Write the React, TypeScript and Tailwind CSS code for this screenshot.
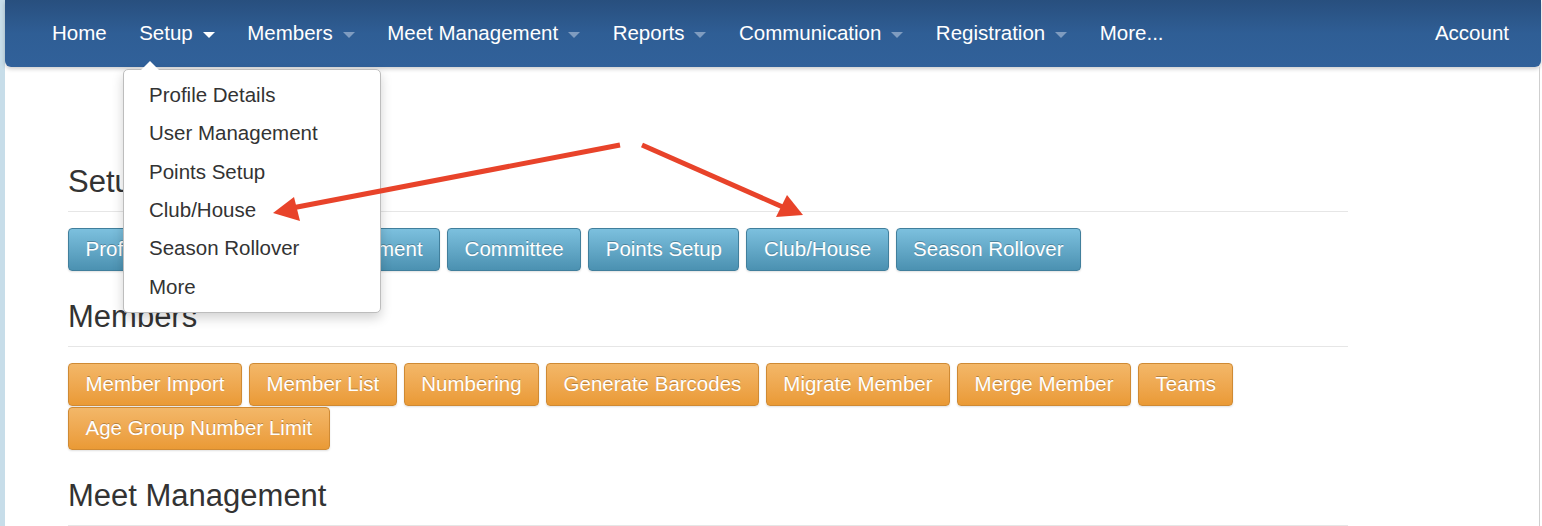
import React from 'react';

const navItems = [
  { label: 'Home', caret: false },
  { label: 'Setup', caret: true, active: true },
  { label: 'Members', caret: true },
  { label: 'Meet Management', caret: true },
  { label: 'Reports', caret: true },
  { label: 'Communication', caret: true },
  { label: 'Registration', caret: true },
  { label: 'More...', caret: false },
];

const setupMenu = ['Profile Details', 'User Management', 'Points Setup', 'Club/House', 'Season Rollover', 'More'];

const setupButtons = ['Profile Details', 'User Management', 'Committee', 'Points Setup', 'Club/House', 'Season Rollover'];

const memberButtons = [
  'Member Import',
  'Member List',
  'Numbering',
  'Generate Barcodes',
  'Migrate Member',
  'Merge Member',
  'Teams',
  'Age Group Number Limit',
];

function Caret({ light }: { light?: boolean }) {
  return (
    <span
      className={`inline-block ml-[10px] mt-[2px] w-0 h-0 border-t-[6px] border-x-[6px] border-x-transparent ${
        light ? 'border-t-white' : 'border-t-[#7f9cc0]'
      }`}
    />
  );
}

function Btn({ label, tone }: { label: string; tone: 'blue' | 'orange' }) {
  const cls =
    tone === 'blue'
      ? 'bg-gradient-to-b from-[#7cc0de] to-[#4b91b1] border-[#417f9c]'
      : 'bg-gradient-to-b from-[#f3b768] to-[#ea9a35] border-[#cf8a34]';
  return (
    <button
      className={`h-[43px] px-[16.5px] rounded-[4px] border text-white text-[20.5px] leading-none shadow-[0_1px_2px_rgba(0,0,0,0.12)] [text-shadow:0_-1px_0_rgba(0,0,0,0.25)] ${cls}`}
    >
      {label}
    </button>
  );
}

function Section({ title, children }: { title: string; children: React.ReactNode }) {
  return (
    <section className="mb-[29px]">
      <h2 className="text-[31px] leading-[34px] text-[#333]">{title}</h2>
      <div className="mt-[12px] mb-[16px] h-px bg-[#e6e6e6]" />
      {children}
    </section>
  );
}

export default function App() {
  return (
    <div
      className="relative w-[1542px] h-[526px] overflow-hidden flex bg-white"
      style={{ fontFamily: '"Liberation Sans", Arial, Helvetica, sans-serif' }}
    >
      {/* Left page strip */}
      <div className="w-[5px] shrink-0 bg-[#c7dde9]" />

      <div className="w-[1536px] shrink-0 flex flex-col">
        {/* Navbar */}
        <nav className="h-[67px] shrink-0 flex items-center justify-between pl-[47px] pr-[32px] rounded-b-[6px] bg-gradient-to-b from-[#284f7e] via-[#2f5e95] to-[#31619a] shadow-[0_2px_4px_rgba(0,0,0,0.2)] text-white text-[20.5px]">
          <div className="flex items-center gap-[32.5px]">
            {navItems.map((n) => (
              <div key={n.label} className="flex items-center">
                <span>{n.label}</span>
                {n.caret && <Caret light={n.active} />}
              </div>
            ))}
          </div>
          <span>Account</span>
        </nav>

        {/* Content */}
        <main className="flex-1 border-r border-[#cfcfcf] mr-px pl-[63px] pt-[98px]">
          <div className="w-[1280px]">
            <Section title="Setup">
              <div className="flex flex-wrap gap-x-[7px] gap-y-px">
                {setupButtons.map((b) => (
                  <Btn key={b} label={b} tone="blue" />
                ))}
              </div>
            </Section>
            <Section title="Members">
              <div className="flex flex-wrap gap-x-[7px] gap-y-px w-[1180px]">
                {memberButtons.map((b) => (
                  <Btn key={b} label={b} tone="orange" />
                ))}
              </div>
            </Section>
            <Section title="Meet Management">
              <div />
            </Section>
          </div>
        </main>
      </div>

      {/* Setup dropdown */}
      <div className="absolute left-[123px] top-[69px] w-[258px] py-[6px] bg-white border border-[#bdbdbd] rounded-[5px] shadow-[0_5px_12px_rgba(0,0,0,0.18)] text-[20.5px] text-[#333]">
        <span className="absolute -top-[9px] left-[17px] w-0 h-0 border-b-[9px] border-b-white border-x-[9px] border-x-transparent" />
        {setupMenu.map((m) => (
          <div key={m} className="h-[38.4px] flex items-center pl-[25px]">
            {m}
          </div>
        ))}
      </div>

      {/* Annotation arrows */}
      <svg className="absolute inset-0 pointer-events-none" width="1542" height="526" viewBox="0 0 1542 526">
        <line x1="620" y1="145" x2="292" y2="208" stroke="#e8432a" strokeWidth="5" />
        <polygon points="273,213 294,197 300,221" fill="#e8432a" />
        <line x1="642" y1="145" x2="785" y2="208" stroke="#e8432a" strokeWidth="5" />
        <polygon points="803,215 787,195 776,217" fill="#e8432a" />
      </svg>
    </div>
  );
}
